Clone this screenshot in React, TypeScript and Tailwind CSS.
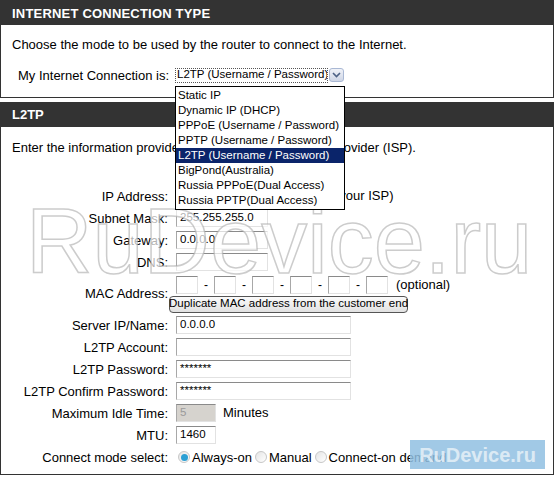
import React from "react";

const F = "font-['Liberation_Sans',Arial,sans-serif]";

function TextBox({ w, value, disabled }: { w: number; value?: string; disabled?: boolean }) {
  return (
    <div
      className={`h-[18px] border border-t-[#8a8a8a] border-l-[#a8a8a8] border-r-[#e2e2e2] border-b-[#e2e2e2] flex items-center pl-[3px] text-[11.5px] leading-none whitespace-nowrap ${
        disabled ? "bg-[#d6d3ce] text-[#9a9a9a]" : "bg-white text-black"
      }`}
      style={{ width: w }}
    >
      {value}
    </div>
  );
}

function Row({ label, children }: { label: string; children?: React.ReactNode }) {
  return (
    <div className="flex items-center h-[22px]">
      <div className="w-[167px] text-right text-[13px] leading-none shrink-0 whitespace-nowrap">{label}</div>
      <div className="ml-[8px] flex items-center">{children}</div>
    </div>
  );
}

function Radio({ checked }: { checked?: boolean }) {
  return (
    <span className="inline-flex w-[12px] h-[12px] rounded-full border border-[#c7c7c7] bg-gradient-to-br from-[#e4e4e4] to-white items-center justify-center mr-[2px] shrink-0">
      {checked && <span className="w-[7px] h-[7px] rounded-full bg-[#2b9fd4]" />}
    </span>
  );
}

export default function App() {
  const options = [
    "Static IP",
    "Dynamic IP (DHCP)",
    "PPPoE (Username / Password)",
    "PPTP (Username / Password)",
    "L2TP (Username / Password)",
    "BigPond(Australia)",
    "Russia PPPoE(Dual Access)",
    "Russia PPTP(Dual Access)",
  ];
  return (
    <div className={`relative w-[554px] h-[477px] overflow-hidden bg-white text-black ${F}`}>
      {/* Section 1 */}
      <div className="h-[25px] bg-[#333333] text-white font-bold text-[13px] flex items-center pl-[12px] pt-[2px] tracking-[0.2px]">
        INTERNET CONNECTION TYPE
      </div>
      <div className="h-[73px] border-x border-b border-[#333333] flex flex-col">
        <div className="pl-[11px] pt-[12px] text-[13px] leading-[16px] whitespace-nowrap">
          Choose the mode to be used by the router to connect to the Internet.
        </div>
        <div className="flex items-center mt-[14px] h-[16px]">
          <div className="pl-[17px] w-[174px] text-[13px] leading-none whitespace-nowrap">My Internet Connection is:</div>
          <div className="flex items-center h-[17px]">
            <div className="w-[153px] h-[15px] border border-dotted border-[#555] flex items-center pl-[1px] text-[11.5px] leading-none whitespace-nowrap overflow-hidden">
              L2TP (Username / Password)
            </div>
            <div className="ml-[1px] w-[15px] h-[14px] rounded-[3px] border border-[#a9b8d4] bg-gradient-to-b from-[#f0f2f8] to-[#cfd6e6] flex items-center justify-center">
              <svg width="9" height="6" viewBox="0 0 9 6">
                <path d="M1 1 L4.5 4.5 L8 1" fill="none" stroke="#4d6185" strokeWidth="1.6" />
              </svg>
            </div>
          </div>
        </div>
      </div>

      <div className="h-[4px]" />

      {/* Section 2 */}
      <div className="h-[25px] bg-[#333333] text-white font-bold text-[13px] flex items-center pl-[12px] pt-[1px]">
        L2TP
      </div>
      <div className="h-[348px] border-x border-b border-[#333333]">
        <div className="pl-[11px] pt-[13px] text-[13px] leading-[16px] whitespace-nowrap">
          Enter the information provided by your Internet Service Provider (ISP).
        </div>
        <div className="mt-[29px]">
          <Row label="IP Address:">
            <TextBox w={80} value="0.0.0.0" />
            <span className="ml-[6px] text-[13px] whitespace-nowrap">(assigned by your ISP)</span>
          </Row>
          <Row label="Subnet Mask:">
            <TextBox w={92} value="255.255.255.0" />
          </Row>
          <Row label="Gateway:">
            <TextBox w={92} value="0.0.0.0" />
          </Row>
          <Row label="DNS:">
            <TextBox w={92} value="" />
          </Row>
          <div className="flex items-center h-[41px]">
            <div className="w-[167px] text-right text-[13px] leading-none shrink-0">MAC Address:</div>
            <div className="flex flex-col">
              <div className="flex items-center ml-[8px] h-[20px]">
                {[0, 1, 2, 3, 4, 5].map((i) => (
                  <React.Fragment key={i}>
                    {i > 0 && <span className="w-[16px] text-center text-[12px]">-</span>}
                    <TextBox w={22} />
                  </React.Fragment>
                ))}
                <span className="ml-[8px] text-[13px] whitespace-nowrap">(optional)</span>
              </div>
              <div className="ml-[1px] mt-[1px] h-[17px] w-[239px] rounded-[4px] border border-[#555] bg-gradient-to-b from-[#fbfbfb] to-[#e1e1e1] text-[11.5px] leading-none flex items-center justify-center whitespace-nowrap">
                Duplicate MAC address from the customer end
              </div>
            </div>
          </div>
          <Row label="Server IP/Name:">
            <TextBox w={175} value="0.0.0.0" />
          </Row>
          <Row label="L2TP Account:">
            <TextBox w={175} value="" />
          </Row>
          <Row label="L2TP Password:">
            <TextBox w={175} value="*******" />
          </Row>
          <Row label="L2TP Confirm Password:">
            <TextBox w={175} value="*******" />
          </Row>
          <Row label="Maximum Idle Time:">
            <TextBox w={40} value="5" disabled />
            <span className="ml-[7px] text-[13px]">Minutes</span>
          </Row>
          <Row label="MTU:">
            <TextBox w={40} value="1460" />
          </Row>
          <Row label="Connect mode select:">
            <div className="flex items-center text-[13px] leading-none ml-[2px] whitespace-nowrap">
              <Radio checked />
              <span>Always-on</span>
              <span className="ml-[3px]" />
              <Radio />
              <span>Manual</span>
              <span className="ml-[3px]" />
              <Radio />
              <span>Connect-on demand</span>
            </div>
          </Row>
        </div>
      </div>

      {/* Watermark */}
      <div className="absolute left-[26px] top-[195px] text-[92px] leading-none text-white/70 [-webkit-text-stroke:1.5px_rgba(170,170,170,0.6)] font-['Liberation_Sans',sans-serif] font-normal pointer-events-none select-none whitespace-nowrap">
        RuDevice.ru
      </div>

      {/* Logo bottom right */}
      <div className="absolute left-[410px] top-[440px] w-[135px] h-[29px] bg-[#90c0e2]/85 flex items-center justify-center text-[20px] leading-none font-bold text-[#e4eff7]/90 font-['Liberation_Sans',sans-serif] whitespace-nowrap">
        RuDevice.ru
      </div>

      {/* Dropdown list */}
      <div className="absolute left-[175px] top-[86px] w-[170px] bg-white border border-black text-[11.5px] leading-[15px] py-[1px]">
        {options.map((o) => (
          <div
            key={o}
            className={`h-[15px] pl-[2px] whitespace-nowrap ${
              o.startsWith("L2TP") ? "bg-[#0a246a] text-white" : "text-black"
            }`}
          >
            {o}
          </div>
        ))}
      </div>
    </div>
  );
}
